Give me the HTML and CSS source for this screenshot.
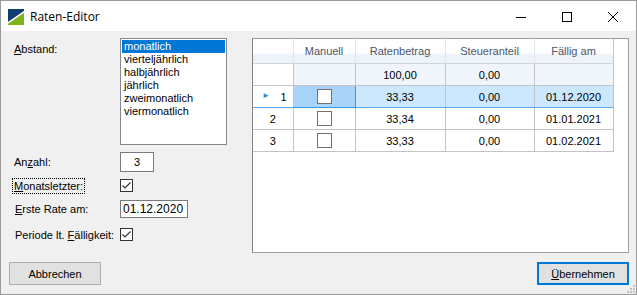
FILE: index.html
```html
<!DOCTYPE html>
<html lang="de">
<head>
    <meta charset="UTF-8">
    <title>Raten-Editor</title>
    <link rel="stylesheet" href="styles.css">
</head>
<body>
<div class="window">
    <div class="titlebar">
        <svg class="app-icon" width="16" height="16" viewBox="0 0 16 16">
            <rect x="0" y="0" width="16" height="16" rx="1" fill="#8dbb2c"/>
            <polygon points="0,0 16,0 16,2 0,13" fill="#123f73"/>
            <polygon points="0,13 16,2 16,4 0,15" fill="#ffffff"/>
            <polygon points="0,15 16,4 16,16 0,16" fill="#7fb21f"/>
        </svg>
        <span class="title">Raten-Editor</span>
        <div class="caption-btns">
            <span class="cbtn"><svg width="10" height="10" viewBox="0 0 10 10"><line x1="0" y1="5.5" x2="10" y2="5.5" stroke="#000" stroke-width="1"/></svg></span>
            <span class="cbtn"><svg width="10" height="10" viewBox="0 0 10 10"><rect x="0.5" y="0.5" width="9" height="9" fill="none" stroke="#000" stroke-width="1"/></svg></span>
            <span class="cbtn"><svg width="10" height="10" viewBox="0 0 10 10"><path d="M0 0 L10 10 M10 0 L0 10" stroke="#000" stroke-width="1"/></svg></span>
        </div>
    </div>

    <div class="client">
        <div class="main">
            <div class="form">
                <div class="row row-list">
                    <label class="lbl lbl-top"><u>A</u>bstand:</label>
                    <ul class="listbox">
                        <li class="selected">monatlich</li>
                        <li>vierteljährlich</li>
                        <li>halbjährlich</li>
                        <li>jährlich</li>
                        <li>zweimonatlich</li>
                        <li>viermonatlich</li>
                    </ul>
                </div>
                <div class="row row-count">
                    <label class="lbl">An<u>z</u>ahl:</label>
                    <div class="textbox center tb-count">3</div>
                </div>
                <div class="row row-last">
                    <label class="lbl"><span class="focus"><u>M</u>onatsletzter:</span></label>
                    <span class="check"><svg width="11" height="11" viewBox="0 0 11 11"><path d="M1.5 5.5 L4 8 L9.5 2.5" fill="none" stroke="#333" stroke-width="1.2"/></svg></span>
                </div>
                <div class="row row-first">
                    <label class="lbl"><u>E</u>rste Rate am:</label>
                    <div class="textbox tb-date">01.12.2020</div>
                </div>
                <div class="row row-period">
                    <label class="lbl">Periode lt. <u>F</u>älligkeit:</label>
                    <span class="check"><svg width="11" height="11" viewBox="0 0 11 11"><path d="M1.5 5.5 L4 8 L9.5 2.5" fill="none" stroke="#333" stroke-width="1.2"/></svg></span>
                </div>
            </div>

            <div class="grid">
                <table>
                    <colgroup>
                        <col class="rh-col">
                        <col class="c-man">
                        <col class="c-rate">
                        <col class="c-tax">
                        <col class="c-due">
                    </colgroup>
                    <thead>
                        <tr>
                            <th class="rh"></th>
                            <th>Manuell</th>
                            <th>Ratenbetrag</th>
                            <th>Steueranteil</th>
                            <th class="last">Fällig am</th>
                        </tr>
                    </thead>
                    <tbody>
                        <tr class="sum">
                            <td class="rh"></td>
                            <td></td>
                            <td>100,00</td>
                            <td>0,00</td>
                            <td></td>
                        </tr>
                        <tr class="current">
                            <td class="rh"><span class="arrow">&#9658;</span><span class="num">1</span></td>
                            <td class="cell-focus"><span class="box"></span></td>
                            <td>33,33</td>
                            <td>0,00</td>
                            <td>01.12.2020</td>
                        </tr>
                        <tr>
                            <td class="rh">2</td>
                            <td><span class="box"></span></td>
                            <td>33,34</td>
                            <td>0,00</td>
                            <td>01.01.2021</td>
                        </tr>
                        <tr>
                            <td class="rh">3</td>
                            <td><span class="box"></span></td>
                            <td>33,33</td>
                            <td>0,00</td>
                            <td>01.02.2021</td>
                        </tr>
                    </tbody>
                </table>
            </div>
        </div>

        <div class="buttons">
            <button class="btn">Abbrechen</button>
            <button class="btn btn-default"><u>Ü</u>bernehmen</button>
        </div>
        <svg class="grip" width="8" height="8" viewBox="0 0 8 8">
            <rect x="6" y="0" width="2" height="2" fill="#c0c0c0"/>
            <rect x="3" y="3" width="2" height="2" fill="#c0c0c0"/>
            <rect x="6" y="3" width="2" height="2" fill="#c0c0c0"/>
            <rect x="0" y="6" width="2" height="2" fill="#c0c0c0"/>
            <rect x="3" y="6" width="2" height="2" fill="#c0c0c0"/>
            <rect x="6" y="6" width="2" height="2" fill="#c0c0c0"/>
        </svg>
    </div>
</div>
</body>
</html>
```

FILE: styles.css
```css
body { margin: 0; font-family: "Liberation Sans", Arial, sans-serif; font-size: 11px; color: #000; }

.window {
    width: 637px;
    height: 295px;
    box-sizing: border-box;
    border: 1px solid #9a9a9a;
    display: flex;
    flex-direction: column;
    background: #f0f0f0;
}

/* title bar */
.titlebar {
    height: 30px;
    background: #fff;
    display: flex;
    align-items: center;
    flex-shrink: 0;
}
.app-icon { margin-left: 7px; margin-top: 1px; }
.title { margin-left: 6px; font-size: 12px; font-family: "Open Sans", "Liberation Sans", sans-serif; margin-top: 1px; }
.caption-btns { margin-left: auto; display: flex; }
.cbtn { width: 46px; height: 30px; display: flex; align-items: center; justify-content: center; }
.cbtn svg { margin-top: 2px; }

/* client area */
.client { flex: 1; position: relative; display: flex; flex-direction: column; }
.main { display: flex; padding-top: 7px; height: 215px; }

.form { width: 238px; padding-left: 13px; flex-shrink: 0; }
.row { display: flex; align-items: center; }
.lbl { width: 106px; flex-shrink: 0; }
.row-list { align-items: flex-start; height: 107px; }
.lbl-top { margin-top: 5px; }
.row-count { margin-top: 7px; height: 20px; }
.row-last { margin-top: 7px; height: 13px; }
.row-first { margin-top: 8px; height: 18px; }
.row-period { margin-top: 10px; height: 13px; }
.row-period .lbl, .row-first .lbl { padding-left: 1px; width: 105px; }

.focus { outline: 1px dotted #000; outline-offset: 1px; }

.listbox {
    list-style: none;
    margin: 0;
    padding: 1px;
    width: 107px;
    height: 107px;
    box-sizing: border-box;
    border: 1px solid #828790;
    background: #fff;
}
.listbox li { height: 13px; line-height: 13px; padding-left: 2px; }
.listbox li.selected { background: #0078d7; color: #fff; }

.textbox {
    box-sizing: border-box;
    border: 1px solid #7a7a7a;
    background: #fff;
    height: 100%;
    line-height: 16px;
    padding-left: 2px;
}
.center { text-align: center; padding-left: 0; line-height: 18px; }
.tb-count { width: 34px; }
.tb-date { width: 68px; font-size: 12px; }

.check {
    width: 13px;
    height: 13px;
    box-sizing: border-box;
    border: 1px solid #333;
    background: #fff;
    display: flex;
    align-items: center;
    justify-content: center;
}

/* data grid */
.grid {
    width: 377px;
    height: 215px;
    box-sizing: border-box;
    border: 1px solid #a0a0a0;
    border-left-color: #828282;
    background: #fff;
}
.grid table { border-collapse: collapse; table-layout: fixed; width: 360px; }
.rh-col { width: 40px; }
.c-man { width: 62px; }
.c-rate { width: 90px; }
.c-tax { width: 89px; }
.c-due { width: 79px; }
.grid th, .grid td {
    border: 1px solid #c4c4c4;
    text-align: center;
    padding: 0;
    white-space: nowrap;
    overflow: hidden;
}
.grid th {
    height: 24px;
    font-weight: normal;
    color: #4a5668;
    background: linear-gradient(#ffffff, #ffffff 60%, #eef2f9 61%, #eef2f9);
    border-color: #e3e6ec;
    border-bottom-color: #d2d7df;
    border-top: none;
}
.grid td { height: 21px; }
.grid tr > :first-child { border-left: none; }
.grid th.last { border-right-color: #c4c4c4; }

.sum td { background: #f0f5fc; }
.sum td.rh { background: #fff; }
.current td { background: #cce8ff; border-top-color: #5ea6ea; border-bottom-color: #5ea6ea; }
.current td.cell-focus { background: #a9d3f8; border-color: #3d95e6; }
.current td.rh { background: #fff; text-align: right; padding-right: 6px; }
.arrow { color: #3a8ad6; font-size: 8px; float: left; margin-left: 9px; }

.box {
    display: inline-block;
    width: 15px;
    height: 15px;
    box-sizing: border-box;
    border: 1px solid #707070;
    background: #fff;
    vertical-align: middle;
}

/* bottom buttons */
.buttons {
    display: flex;
    justify-content: space-between;
    padding: 9px 7px 0 8px;
}
.btn {
    width: 92px;
    height: 23px;
    box-sizing: border-box;
    border: 1px solid #adadad;
    background: #e1e1e1;
    font-family: "Liberation Sans", Arial, sans-serif;
    font-size: 11px;
    color: #000;
    padding: 0;
}
.btn-default { border: 2px solid #0078d7; }

.grip { position: absolute; right: 1px; bottom: 1px; }
```
